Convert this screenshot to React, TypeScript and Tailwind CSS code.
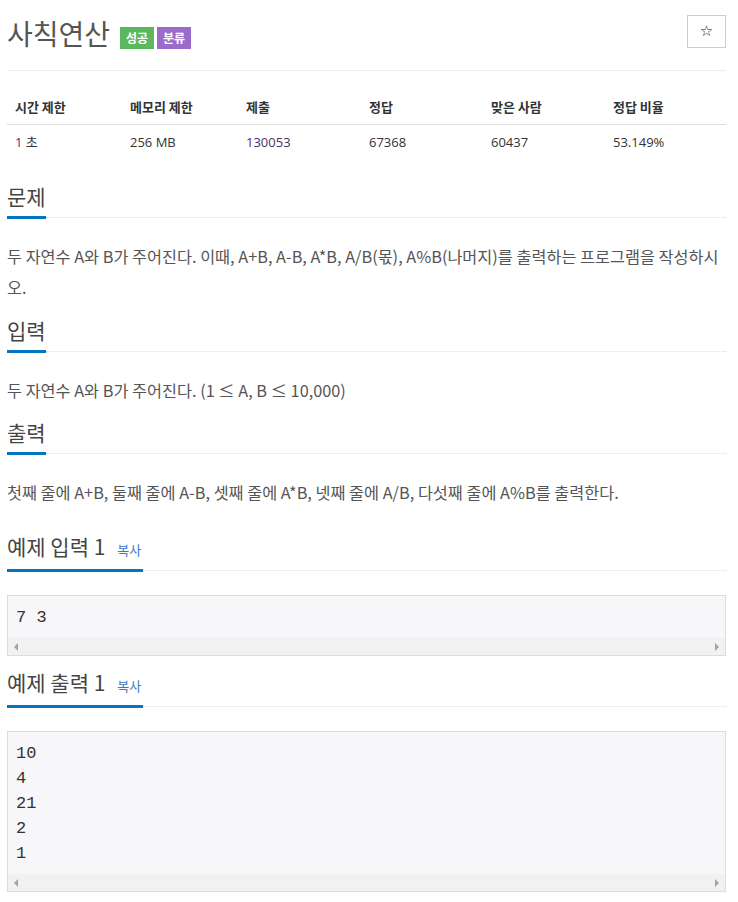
import React from "react";

const KR = "font-['Noto_Sans_CJK_KR',sans-serif]";
const OS = "font-['Open_Sans','Noto_Sans_CJK_KR',sans-serif]";

function SectionHead({ children, extra }: { children: React.ReactNode; extra?: React.ReactNode }) {
  return (
    <div className="flex items-end">
      <div className={`border-b-[3px] border-[#0076c0] ${extra ? "pb-[8px]" : "pb-[5px]"} flex items-baseline`}>
        <span className={`${KR} text-[21px] leading-[30px] text-[#444]`}>{children}</span>
        {extra}
      </div>
      <div className="flex-1 border-b border-dotted border-[#ddd] mb-[1px]" />
    </div>
  );
}

function ScrollBar() {
  return (
    <div className="h-[17px] bg-[#f1f1f1] flex items-center justify-between px-[6px]">
      <div className="w-0 h-0 border-y-[4px] border-y-transparent border-r-[4px] border-r-[#a3a3a3]" />
      <div className="w-0 h-0 border-y-[4px] border-y-transparent border-l-[4px] border-l-[#a3a3a3]" />
    </div>
  );
}

function CodeBox({ lines }: { lines: string[] }) {
  return (
    <div className="border border-[#dcdcdc] bg-[#f7f7f9]">
      <pre className="font-['Liberation_Mono',monospace] text-[17px] leading-[25px] text-[#333] pl-[8px] pt-[9px] pb-[8px] m-0">
        {lines.join("\n")}
      </pre>
      <ScrollBar />
    </div>
  );
}

const Copy = () => <span className={`${KR} text-[13px] text-[#3c7bc0] ml-[12px] mr-[2px]`}>복사</span>;

export default function App() {
  const heads = ["시간 제한", "메모리 제한", "제출", "정답", "맞은 사람", "정답 비율"];
  const para = `${KR} text-[16.3px] leading-[31px] text-[#555] mt-[22px]`;
  return (
    <div className="bg-white min-h-[902px] pl-[7px] pr-[12px] text-[#333]">
      {/* title */}
      <div className="flex items-start justify-between pt-[15px] pb-[20px] border-b border-[#eee]">
        <div className="flex items-center gap-[3px] pt-[1px]">
          <h1 className={`${KR} text-[28px] leading-[34px] text-[#555] mr-[7px] font-normal`}>사칙연산</h1>
          <span className={`${KR} bg-[#5cb85c] text-white text-[12px] font-bold w-[34px] h-[22px] flex items-center justify-center mt-[9px]`}>성공</span>
          <span className={`${KR} bg-[#9b6bcc] text-white text-[12px] font-bold w-[34px] h-[22px] flex items-center justify-center mt-[9px]`}>분류</span>
        </div>
        <div className="w-[39px] h-[33px] border border-[#ccc] flex items-center justify-center text-[15px] text-[#222] font-['DejaVu_Sans',sans-serif]">
          ☆
        </div>
      </div>

      {/* table */}
      <div className="mt-[19px] grid grid-cols-[115px_116px_123px_122px_122px_1fr]">
        {heads.map((h) => (
          <div key={h} className={`${KR} text-[13px] font-bold text-[#333] px-[8px] h-[35px] flex items-center border-b border-[#ddd]`}>
            {h}
          </div>
        ))}
        <div className={`${OS} text-[13px] px-[8px] h-[36px] flex items-center`}>
          <span className="text-[#5a2a7a]">1</span>&nbsp;초
        </div>
        <div className={`${OS} text-[13px] px-[8px] h-[36px] flex items-center`}>256 MB</div>
        <div className={`${OS} text-[13px] px-[8px] h-[36px] flex items-center text-[#4a3060]`}>130053</div>
        <div className={`${OS} text-[13px] px-[8px] h-[36px] flex items-center`}>67368</div>
        <div className={`${OS} text-[13px] px-[8px] h-[36px] flex items-center`}>60437</div>
        <div className={`${OS} text-[13px] px-[8px] h-[36px] flex items-center`}>53.149%</div>
      </div>

      {/* 문제 */}
      <div className="mt-[20px]">
        <SectionHead>문제</SectionHead>
        <p className={para}>
          두 자연수 A와 B가 주어진다. 이때, A+B, A-B, A*B, A/B(몫), A%B(나머지)를 출력하는 프로그램을 작성하시오.
        </p>
      </div>

      {/* 입력 */}
      <div className="mt-[12px]">
        <SectionHead>입력</SectionHead>
        <p className={para}>
          두 자연수 A와 B가 주어진다. (1 ≤ A, B ≤ 10,000)
        </p>
      </div>

      {/* 출력 */}
      <div className="mt-[11px]">
        <SectionHead>출력</SectionHead>
        <p className={para}>
          첫째 줄에 A+B, 둘째 줄에 A-B, 셋째 줄에 A*B, 넷째 줄에 A/B, 다섯째 줄에 A%B를 출력한다.
        </p>
      </div>

      {/* 예제 입력 */}
      <div className="mt-[23px]">
        <SectionHead extra={<Copy />}>예제 입력 1</SectionHead>
        <div className="mt-[23px]">
          <CodeBox lines={["7 3"]} />
        </div>
      </div>

      {/* 예제 출력 */}
      <div className="mt-[11px]">
        <SectionHead extra={<Copy />}>예제 출력 1</SectionHead>
        <div className="mt-[23px]">
          <CodeBox lines={["10", "4", "21", "2", "1"]} />
        </div>
      </div>
    </div>
  );
}
